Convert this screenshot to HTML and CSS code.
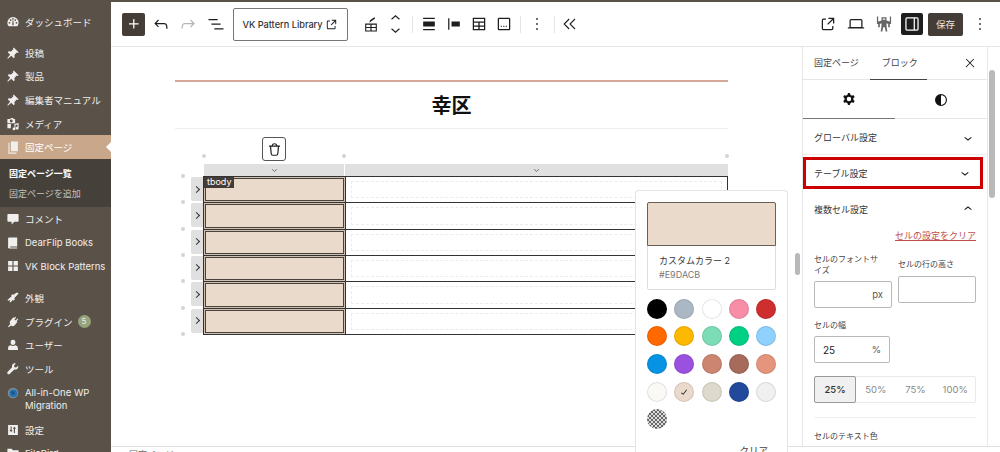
FILE: index.html
```html
<!DOCTYPE html>
<html lang="ja">
<head>
    <meta charset="UTF-8">
    <title>固定ページを編集</title>
    <link rel="stylesheet" href="styles.css">
</head>
<body>
<div class="app">
    <!-- 管理メニュー -->
    <nav class="adminmenu">
        <a class="menu-item first"><svg class="mi" viewBox="0 0 20 20"><path d="M10 3a8 8 0 0 0-8 8c0 2 .7 3.7 1.9 5h12.2A7.900 7.900 0 0 0 18 11a8 8 0 0 0-8-8zM5 12.500a1.300 1.300 0 1 1 0-2.600 1.300 1.300 0 0 1 0 2.600zm1.700-4a1.300 1.300 0 1 1 0-2.600 1.300 1.300 0 0 1 0 2.600zM10 6.700a1.200 1.200 0 1 1 0-2.400 1.200 1.200 0 0 1 0 2.400zm1 7.800H9l.2-5 .8-3 .8 3zm2.300-6a1.300 1.300 0 1 1 0-2.600 1.300 1.300 0 0 1 0 2.600zm1.700 4a1.300 1.300 0 1 1 0-2.600 1.300 1.300 0 0 1 0 2.600z"/></svg>ダッシュボード</a>
        <div class="menu-gap"></div>
        <a class="menu-item"><svg class="mi" viewBox="0 0 20 20"><path d="M11 2l7 7-1.500 1-1.200-.6-3.300 3.300.4 3.300-1.400 1.400-3.400-3.400L3 18l-1 0 0-1 3.900-4.600-3.400-3.400L3.900 7.600l3.300.4 3.300-3.300L10 3.500z"/></svg>投稿</a>
        <a class="menu-item"><svg class="mi" viewBox="0 0 20 20"><path d="M11 2l7 7-1.500 1-1.200-.6-3.300 3.300.4 3.300-1.400 1.400-3.400-3.400L3 18l-1 0 0-1 3.900-4.600-3.400-3.400L3.900 7.600l3.300.4 3.300-3.300L10 3.500z"/></svg>製品</a>
        <a class="menu-item"><svg class="mi" viewBox="0 0 20 20"><path d="M11 2l7 7-1.500 1-1.200-.6-3.300 3.300.4 3.300-1.400 1.400-3.400-3.400L3 18l-1 0 0-1 3.900-4.600-3.400-3.400L3.900 7.600l3.300.4 3.300-3.300L10 3.500z"/></svg>編集者マニュアル</a>
        <a class="menu-item"><svg class="mi" viewBox="0 0 20 20"><path d="M2 3h4l1-1.500h3L11 3h2v6H2zm5.500 4.700a2 2 0 1 0 0-4 2 2 0 0 0 0 4zM2 10h5v6H2zM12 10l6-1.500V16a2 2 0 1 1-1.500-1.900v-3.500L13.500 11.400V17a2 2 0 1 1-1.500-1.900z"/></svg>メディア</a>
        <a class="menu-item current"><svg class="mi" viewBox="0 0 20 20"><path d="M7 2h10v14H7zM5 4v14h10v1.500H3.500V4z"/></svg>固定ページ</a>
        <div class="submenu">
            <a class="sub-current">固定ページ一覧</a>
            <a>固定ページを追加</a>
        </div>
        <a class="menu-item"><svg class="mi" viewBox="0 0 20 20"><path d="M3 3h14a1 1 0 0 1 1 1v9a1 1 0 0 1-1 1h-5l-4 4v-4H3a1 1 0 0 1-1-1V4a1 1 0 0 1 1-1z"/></svg>コメント</a>
        <a class="menu-item"><svg class="mi" viewBox="0 0 20 20"><path d="M4 2h12v13H6v1.500h10V18H4.500L3 17V3z"/></svg>DearFlip Books</a>
        <a class="menu-item"><svg class="mi" viewBox="0 0 20 20"><path d="M3 3h6.200v6.200H3zM10.800 3H17v6.200h-6.200zM3 10.800h6.200V17H3zM10.800 10.800H17V17h-6.200z"/></svg>VK Block Patterns</a>
        <div class="menu-gap wide"></div>
        <a class="menu-item"><svg class="mi" viewBox="0 0 20 20"><path d="M18 3.500 15.500 2l-5 3.500-1.300-1L7.500 6l.5 1.500L2 13l1.500 1 3-1.500L5 15l1.500 1.500 3-3.500 1.500.7 1.700-1.700-.9-1.500z"/></svg>外観</a>
        <a class="menu-item"><svg class="mi" viewBox="0 0 20 20"><path d="M13 2.500l1.500 1.200-2.300 2.800 1.700 1.300 2.300-2.800L17.500 6l-2.400 3 1.200 1-4.500 5.500c-1.500 1-3.500.5-4.500-.5L4 17.500 3 16.500l3-3.500c-.8-1-1-3 0-4.300L10.500 3.200l1.200 1z"/></svg>プラグイン<span class="badge">5</span></a>
        <a class="menu-item"><svg class="mi" viewBox="0 0 20 20"><path d="M10 2.500a3.500 3.500 0 0 1 3.500 3.500c0 2-1.500 4-3.500 4S6.500 8 6.500 6A3.500 3.500 0 0 1 10 2.500zM7 10.500c1.800 1.300 4.200 1.300 6 0 2.300.5 4 1.800 4 4V17H3v-2.500c0-2.700 1.700-3.500 4-4z"/></svg>ユーザー</a>
        <a class="menu-item"><svg class="mi" viewBox="0 0 20 20"><path d="M17.500 5.500l-3 2.500-2.500-.5-.5-2.500 2.500-3c-2-.5-4 .2-5 2-.6 1-.7 2.300-.3 3.400L2.500 14c-1 1-.8 2.200 0 3s2 1 3-.1l6.500-6.300c1.800.6 3.800 0 4.900-1.600.7-1 .9-2.300.6-3.500z"/></svg>ツール</a>
        <a class="menu-item tall"><svg class="mi wpm" viewBox="0 0 20 20"><circle cx="10" cy="10" r="7.500" fill="#7e8b96"/><circle cx="10.500" cy="10.500" r="5.500" fill="#2271b1"/><circle cx="10" cy="10" r="2.500" fill="#1d5488"/></svg><span>All-in-One WP Migration</span></a>
        <a class="menu-item"><svg class="mi" viewBox="0 0 20 20"><path d="M3 3h14v14H3zm3.500 2v5H5l2.200 3 .1.100L9.500 10H8V5zM12 5l-2.300 3.300h1.500v6h1.600v-6h1.500z" fill-rule="evenodd"/></svg>設定</a>
        <a class="menu-item"><svg class="mi" viewBox="0 0 20 20"><path d="M2 4h6l2 2h8v11H2z"/></svg>FileBird</a>
    </nav>

    <div class="editor">
        <!-- ツールバー -->
        <header class="toolbar">
            <button class="tb-add"><svg viewBox="0 0 24 24"><path d="M11 12.500V17.500H12.500V12.500H17.500V11H12.500V6H11V11H6V12.500H11Z"/></svg></button>
            <svg class="ic ic-undo" viewBox="0 0 24 24"><path d="M18.300 11.700c-.6-.6-1.400-.9-2.300-.9H6.700l2.900-3.300-1.100-1-4.500 5L8.500 16l1-1-2.700-2.700H16c.5 0 .9.2 1.300.5 1 1 1 3.400 1 4.500v.3h1.500v-.2c0-1.500 0-4.300-1.500-5.700z"/></svg>
            <svg class="ic ic-redo" viewBox="0 0 24 24"><path d="M15.600 6.500l-1.100 1 2.900 3.300H8c-.9 0-1.700.3-2.300.9-1.400 1.500-1.400 4.200-1.400 5.600v.2h1.500v-.3c0-1.100 0-3.500 1-4.500.3-.3.700-.5 1.300-.5h9.200L14.500 15l1.100 1.100 4.600-4.600-4.600-5z"/></svg>
            <svg class="ic ic-list" viewBox="0 0 24 24"><path d="M3 6h11v1.500H3V6zm3.500 5.500h11V13h-11v-1.500zM21 17H10v1.500h11V17z"/></svg>
            <div class="pattern-box">VK Pattern Library<svg viewBox="0 0 24 24"><path d="M19.500 4.500h-7V6h4.440l-5.970 5.970 1.060 1.060L18 7.060v4.440h1.500v-7Zm-13 1a2 2 0 0 0-2 2v10a2 2 0 0 0 2 2h10a2 2 0 0 0 2-2v-3H17v3a.5.5 0 0 1-.5.5h-10a.5.5 0 0 1-.5-.5v-10a.5.5 0 0 1 .5-.5h3V5.500h-3Z"/></svg></div>
            <svg class="ic ic-table" viewBox="0 0 24 24"><path d="M5 11.500h14V21H5zm1.300 1.300v2.800h5V12.800zm6.400 0v2.800h5V12.800zm-6.400 4.100v2.800h5v-2.800zm6.400 0v2.800h5v-2.800z" fill-rule="evenodd"/><path d="M10 10.500l.8-3 5.200-3.500 1 1.500-5 3.500z"/></svg>
            <div class="movers">
                <svg viewBox="0 0 12 8"><path d="M1.500 6 6 2l4.500 4" fill="none" stroke="#1e1e1e" stroke-width="1.300"/></svg>
                <svg viewBox="0 0 12 8"><path d="M1.500 2 6 6l4.500-4" fill="none" stroke="#1e1e1e" stroke-width="1.300"/></svg>
            </div>
            <span class="tb-sep sep-a"></span>
            <svg class="ic ic-align" viewBox="0 0 24 24"><path d="M5 4.500h14V6H5zM5 9h14v6H5zM5 18h14v1.500H5z"/></svg>
            <svg class="ic ic-align2" viewBox="0 0 24 24"><path d="M5 5h1.500v14H5zM9 9h10v6H9z"/></svg>
            <svg class="ic ic-grid" viewBox="0 0 24 24"><path d="M4.500 4.500h15v15h-15zM6 6v3h12V6zm0 4.500v3.200h5.200v-3.200zm6.800 0v3.200H18v-3.200zM6 15.200V18h5.200v-2.800zm6.800 0V18H18v-2.800z" fill-rule="evenodd"/></svg>
            <svg class="ic ic-caption" viewBox="0 0 24 24"><path d="M6 4.500h12A1.500 1.500 0 0 1 19.500 6v12a1.500 1.500 0 0 1-1.500 1.500H6A1.500 1.500 0 0 1 4.500 18V6A1.500 1.500 0 0 1 6 4.500zM6 6v12h12V6zM8 14h1.500v1.300H8zM11 14h1.500v1.300H11zM14 14h1.500v1.300H14z" fill-rule="evenodd"/></svg>
            <span class="tb-sep sep-b"></span>
            <svg class="ic ic-kebab" viewBox="0 0 24 24"><path d="M13 19h-2v-2h2v2zm0-6h-2v-2h2v2zm0-6h-2V5h2v2z"/></svg>
            <span class="tb-sep sep-c"></span>
            <svg class="ic ic-collapse" viewBox="0 0 24 24"><path d="M11 6 5 12l6 6M18 6l-6 6 6 6" fill="none" stroke="#1e1e1e" stroke-width="1.300"/></svg>

            <div class="tb-right">
                <svg class="ic" viewBox="0 0 24 24"><path d="M19.500 4.500h-7V6h4.440l-5.970 5.970 1.060 1.060L18 7.060v4.440h1.500v-7Zm-13 1a2 2 0 0 0-2 2v10a2 2 0 0 0 2 2h10a2 2 0 0 0 2-2v-3H17v3a.5.5 0 0 1-.5.5h-10a.5.5 0 0 1-.5-.5v-10a.5.5 0 0 1 .5-.5h3V5.500h-3Z"/></svg>
                <svg class="ic ic-laptop" viewBox="0 0 24 24"><path d="M20.500 16h-.7V8c0-1.100-.9-2-2-2H6.200c-1.100 0-2 .9-2 2v8h-.7c-.8 0-1.500.7-1.500 1.500h20c0-.8-.7-1.500-1.500-1.500zM5.700 8c0-.3.2-.5.500-.5h11.600c.3 0 .5.2.5.5v7.600H5.700V8z"/></svg>
                <svg class="ic ic-robot" viewBox="0 0 24 24"><path d="M9 4h6v4h1l3 1v7h-2v-4l-2-1v3l1 7h-2l-1-5h-2l-1 5H8l1-7v-3l-2 1v4H5V9l3-1h1zm1.500 1.500v1.500h3V5.500zM3.500 3H5v9H3.500zM19 3h1.500v9H19z" fill-rule="evenodd"/></svg>
                <button class="tb-panel"><svg viewBox="0 0 24 24"><path d="M18 4H6a2 2 0 0 0-2 2v12c0 1.100.9 2 2 2h12a2 2 0 0 0 2-2V6a2 2 0 0 0-2-2zM5.500 18V6c0-.3.2-.5.5-.5h8v13H6c-.3 0-.5-.2-.5-.5zm13 0c0 .3-.2.5-.5.5h-2.500v-13H18c.3 0 .5.2.5.5v12z"/></svg></button>
                <button class="tb-save">保存</button>
                <svg class="ic ic-kebab-end" viewBox="0 0 24 24"><path d="M13 19h-2v-2h2v2zm0-6h-2v-2h2v2zm0-6h-2V5h2v2z"/></svg>
            </div>
        </header>

        <div class="workspace">
            <!-- 編集エリア -->
            <main class="canvas">
                <div class="page">
                    <hr class="title-rule">
                    <h2 class="page-title">幸区</h2>
                    <hr class="title-end">
                    <div class="table-block">
                        <button class="trash"><svg viewBox="0 0 24 24"><path fill-rule="evenodd" d="M12 5.500A2.250 2.250 0 0 0 9.878 7h4.244A2.251 2.251 0 0 0 12 5.500ZM12 4a3.751 3.751 0 0 0-3.675 3H5v1.500h1.270l.818 8.997a2.750 2.750 0 0 0 2.739 2.501h4.347a2.750 2.750 0 0 0 2.738-2.500L17.730 8.500H19V7h-3.325A3.751 3.751 0 0 0 12 4Zm4.224 4.500H7.776l.806 8.861a1.250 1.250 0 0 0 1.245 1.137h4.347a1.250 1.250 0 0 0 1.245-1.137l.805-8.861Z"/></svg></button>
                        <span class="dot d-top1"></span><span class="dot d-top2"></span><span class="dot d-top3"></span>
                        <div class="col-handles">
                            <div class="col-handle"><svg viewBox="0 0 12 8"><path d="M2 2l4 3.500L10 2" fill="none" stroke="#555" stroke-width="1.300"/></svg></div>
                            <div class="col-handle"><svg viewBox="0 0 12 8"><path d="M2 2l4 3.500L10 2" fill="none" stroke="#555" stroke-width="1.300"/></svg></div>
                        </div>
                        <div class="table-row-wrap">
                            <div class="row-handles">
                                <div class="row-handle"><i></i></div>
                                <div class="row-handle"><i></i></div>
                                <div class="row-handle"><i></i></div>
                                <div class="row-handle"><i></i></div>
                                <div class="row-handle"><i></i></div>
                                <div class="row-handle"><i></i></div>
                            </div>
                            <div class="dots-left"><span></span><span></span><span></span><span></span><span></span><span></span><span></span></div>
                            <div class="table">
                                <span class="tbody-tag">tbody</span>
                                <div class="tr"><div class="td sel"><b></b></div><div class="td"><b></b></div></div>
                                <div class="tr"><div class="td sel"><b></b></div><div class="td"><b></b></div></div>
                                <div class="tr"><div class="td sel"><b></b></div><div class="td"><b></b></div></div>
                                <div class="tr"><div class="td sel"><b></b></div><div class="td"><b></b></div></div>
                                <div class="tr"><div class="td sel"><b></b></div><div class="td"><b></b></div></div>
                                <div class="tr"><div class="td sel"><b></b></div><div class="td"><b></b></div></div>
                            </div>
                        </div>
                    </div>
                </div>
                <div class="canvas-thumb"></div>
            </main>

            <!-- 設定サイドバー -->
            <aside class="inspector">
                <div class="ins-body">
                    <div class="ins-tabs">
                        <span>固定ページ</span>
                        <span class="on">ブロック</span>
                        <svg viewBox="0 0 24 24"><path d="M13 11.800l6.100-6.300-1-1-6.100 6.200-6.100-6.200-1 1 6.100 6.300-6.500 6.700 1 1 6.500-6.600 6.500 6.600 1-1z"/></svg>
                    </div>
                    <div class="ins-icons">
                        <div class="on"><svg viewBox="0 0 24 24"><path fill-rule="evenodd" d="M10.289 4.836A1 1 0 0 1 11.275 4h1.306a1 1 0 0 1 .987.836l.244 1.466c.787.26 1.503.679 2.108 1.218l1.393-.522a1 1 0 0 1 1.216.437l.653 1.130a1 1 0 0 1-.23 1.273l-1.148.944a6.025 6.025 0 0 1 0 2.435l1.149.946a1 1 0 0 1 .23 1.272l-.653 1.130a1 1 0 0 1-1.216.437l-1.394-.522c-.605.54-1.320.958-2.108 1.218l-.244 1.466a1 1 0 0 1-.987.836h-1.306a1 1 0 0 1-.986-.836l-.244-1.466a5.995 5.995 0 0 1-2.108-1.218l-1.394.522a1 1 0 0 1-1.217-.436l-.653-1.131a1 1 0 0 1 .23-1.272l1.149-.946a6.026 6.026 0 0 1 0-2.435l-1.148-.944a1 1 0 0 1-.23-1.272l.653-1.131a1 1 0 0 1 1.217-.437l1.393.522a5.994 5.994 0 0 1 2.108-1.218l.244-1.466ZM14.929 12a3 3 0 1 1-6 0 3 3 0 0 1 6 0Z"/></svg></div>
                        <div><svg viewBox="0 0 24 24"><path fill-rule="evenodd" d="M12 4a8 8 0 1 0 0 16 8 8 0 0 0 0-16zm0 1.500v13a6.500 6.500 0 0 0 0-13z"/></svg></div>
                    </div>
                    <div class="section"><span>グローバル設定</span><svg viewBox="0 0 24 24"><path d="M17.500 11.600 12 16l-5.500-4.400.9-1.200L12 14l4.500-3.600z"/></svg></div>
                    <div class="section highlighted"><span>テーブル設定</span><svg viewBox="0 0 24 24"><path d="M17.500 11.600 12 16l-5.500-4.400.9-1.200L12 14l4.500-3.600z"/></svg></div>
                    <div class="section open"><span>複数セル設定</span><svg viewBox="0 0 24 24"><path d="M6.500 12.400 12 8l5.500 4.400-.9 1.200L12 10l-4.500 3.600z"/></svg></div>
                    <div class="cell-settings">
                        <a class="clear-link">セルの設定をクリア</a>
                        <div class="field-pair">
                            <div class="field">
                                <label>セルのフォントサイズ</label>
                                <div class="input"><em>px</em></div>
                            </div>
                            <div class="field">
                                <label>セルの行の高さ</label>
                                <div class="input"></div>
                            </div>
                        </div>
                        <label class="width-label">セルの幅</label>
                        <div class="input width-input"><span>25</span><em>%</em></div>
                        <div class="width-btns">
                            <span class="on">25%</span><span>50%</span><span>75%</span><span>100%</span>
                        </div>
                        <hr>
                        <label class="color-label">セルのテキスト色</label>
                    </div>
                </div>
                <div class="ins-scroll"><div></div></div>
            </aside>

            <!-- カラーピッカー -->
            <div class="picker">
                <div class="picker-card">
                    <div class="picker-preview"></div>
                    <div class="picker-info">
                        <div class="picker-name">カスタムカラー 2</div>
                        <div class="picker-hex">#E9DACB</div>
                    </div>
                </div>
                <div class="swatches">
                    <i style="background:#000000"></i>
                    <i style="background:#abb8c3"></i>
                    <i style="background:#ffffff"></i>
                    <i style="background:#f78da7"></i>
                    <i style="background:#cf2e2e"></i>
                    <i style="background:#ff6900"></i>
                    <i style="background:#fcb900"></i>
                    <i style="background:#7bdcb5"></i>
                    <i style="background:#00d084"></i>
                    <i style="background:#8ed1fc"></i>
                    <i style="background:#0693e3"></i>
                    <i style="background:#9b51e0"></i>
                    <i style="background:#cc8570"></i>
                    <i style="background:#a76b5b"></i>
                    <i style="background:#e6957d"></i>
                    <i style="background:#fbf9f5"></i>
                    <i class="checked" style="background:#e9dacb"><svg viewBox="0 0 24 24"><path d="M16.700 7.100l-6.300 8.500-3.300-2.500-.9 1.200 4.500 3.400L17.900 8z"/></svg></i>
                    <i style="background:#ded9cd"></i>
                    <i style="background:#214a9c"></i>
                    <i style="background:#f0f0f0"></i>
                    <i class="transparent"></i>
                </div>
                <div class="picker-clear">クリア</div>
            </div>
        </div>
        <footer class="crumbs">固定ページ</footer>
    </div>
</div>
</body>
</html>
```

FILE: styles.css
```css
* {
    box-sizing: border-box;
}
html, body {
    margin: 0;
    height: 452px;
    overflow: hidden;
}
body {
    font-family: 'Inter', 'Noto Sans CJK JP', sans-serif;
    font-size: 11px;
    color: #1e1e1e;
    background-color: #fff;
}
.app {
    display: flex;
    height: 452px;
    border-top: 2px solid #5a5248;
}
button {
    padding: 0;
    border: 0;
    font-family: inherit;
}

/* admin menu */
.adminmenu {
    flex: 0 0 111px;
    background-color: #5a5248;
    color: #f0efee;
    padding-top: 8px;
    overflow: hidden;
}
.menu-item {
    display: flex;
    align-items: center;
    height: 23.7px;
    padding-left: 6px;
    font-size: 9.5px;
    white-space: nowrap;
}
.menu-gap {
    height: 7px;
}
.menu-gap.wide {
    height: 8px;
}
.mi {
    flex: 0 0 14px;
    width: 14px;
    height: 14px;
    margin-right: 5px;
    fill: #f0efee;
}
.menu-item.current {
    position: relative;
    background-color: #c9a78b;
    color: #fff;
}
.menu-item.current::after {
    content: "";
    position: absolute;
    right: 0;
    top: 7px;
    border: 5px solid transparent;
    border-right-color: #fff;
    border-left-width: 0;
}
.submenu {
    height: 48px;
    padding: 5px 9px;
    background-color: #46403a;
    color: #c4c0bb;
    font-size: 9px;
}
.submenu a {
    display: block;
    line-height: 20px;
    white-space: nowrap;
}
.submenu .sub-current {
    color: #fff;
    font-weight: 700;
}
.menu-item.tall {
    height: 37px;
    white-space: normal;
    line-height: 13px;
}
.menu-item .wpm {
    align-self: flex-start;
    margin-top: 5px;
}
.badge {
    display: inline-block;
    width: 13px;
    height: 13px;
    margin-left: 5px;
    border-radius: 50%;
    background-color: #95a27a;
    font-size: 8px;
    line-height: 13px;
    text-align: center;
}

/* toolbar */
.editor {
    flex: 1;
    min-width: 0;
    display: flex;
    flex-direction: column;
}
.toolbar {
    flex: 0 0 45px;
    display: flex;
    align-items: center;
    padding-left: 11px;
    border-bottom: 1px solid #e6e6e6;
}
.ic {
    flex: 0 0 20px;
    width: 20px;
    height: 20px;
    fill: #1e1e1e;
}
.tb-add {
    width: 23px;
    height: 23px;
    margin-right: 6px;
    border-radius: 2px;
    background-color: #443c36;
    display: flex;
    align-items: center;
    justify-content: center;
}
.tb-add svg {
    width: 20px;
    height: 20px;
    fill: #fff;
}
.ic-redo {
    margin-left: 7px;
    fill: #b5b5b5;
}
.ic-list {
    margin-left: 8px;
}
.pattern-box {
    display: flex;
    align-items: center;
    justify-content: center;
    gap: 1px;
    width: 115px;
    height: 33px;
    margin-left: 7px;
    border: 1px solid #777;
    border-radius: 2px;
    font-size: 9.2px;
    font-weight: 500;
    color: #333;
    white-space: nowrap;
}
.pattern-box svg {
    width: 15px;
    height: 15px;
    fill: #1e1e1e;
}
.ic-table {
    margin-left: 13px;
}
.movers {
    display: flex;
    flex-direction: column;
    gap: 6px;
    margin-left: 9px;
}
.movers svg {
    display: block;
    width: 11px;
    height: 7px;
}
.tb-sep {
    width: 1px;
    height: 17px;
    background-color: #e4e4e4;
}
.sep-a {
    margin: 0 6px 0 11px;
}
.ic-align2,
.ic-grid,
.ic-caption {
    margin-left: 5px;
}
.sep-b {
    margin: 0 11px 0 6px;
}
.sep-c {
    margin: 0 5px 0 12px;
}
.ic-kebab {
    margin: 0 -5px;
}
.tb-right {
    margin-left: auto;
    display: flex;
    align-items: center;
    padding-right: 10px;
}
.ic-laptop {
    margin-left: 8px;
}
.ic-robot {
    margin-left: 8px;
    fill: #666;
}
.tb-panel {
    width: 22px;
    height: 22px;
    margin-left: 7px;
    border-radius: 2px;
    background-color: #1e1e1e;
    display: flex;
    align-items: center;
    justify-content: center;
}
.tb-panel svg {
    width: 20px;
    height: 20px;
    fill: #fff;
}
.tb-save {
    width: 35px;
    height: 23px;
    margin-left: 5px;
    border-radius: 2px;
    background-color: #443c36;
    color: #e8e6e4;
    font-size: 9.5px;
}
.ic-kebab-end {
    margin-left: 7px;
}

/* canvas */
.workspace {
    flex: 1;
    min-height: 0;
    display: flex;
    position: relative;
}
.canvas {
    position: relative;
    flex: 1;
    min-width: 0;
    overflow: hidden;
}
.page {
    width: 553px;
    margin: 0 auto;
    transform: translateX(-5px);
    padding-top: 33px;
}
.title-rule {
    margin: 0;
    border: 0;
    height: 2px;
    background-color: #d4a899;
}
.page-title {
    margin: 0;
    height: 46px;
    line-height: 49px;
    font-size: 20px;
    font-weight: 700;
    text-align: center;
    color: #111;
}
.title-end {
    margin: 0;
    border: 0;
    height: 1px;
    background-color: #eeeeee;
}
.table-block {
    position: relative;
    padding: 35px 0 0 28px;
}
.trash {
    position: absolute;
    left: 87px;
    top: 8px;
    width: 24px;
    height: 24px;
    border: 1px solid #555;
    border-radius: 3px;
    background-color: #fff;
    display: flex;
    align-items: center;
    justify-content: center;
}
.trash svg {
    width: 19px;
    height: 19px;
    fill: #1e1e1e;
}
.dot {
    position: absolute;
    top: 25px;
    width: 4px;
    height: 4px;
    border-radius: 50%;
    background-color: #d4d4d4;
}
.d-top1 { left: 27px; }
.d-top2 { left: 167px; }
.d-top3 { left: 550px; }
.col-handles {
    display: grid;
    grid-template-columns: 141px 1fr;
    height: 12px;
}
.col-handle {
    display: flex;
    align-items: center;
    justify-content: center;
    margin-left: 1px;
    background-color: #e0e0e0;
}
.col-handle svg {
    width: 7px;
    height: 5px;
}
.table-row-wrap {
    position: relative;
}
.row-handles {
    position: absolute;
    left: -12px;
    top: 1px;
    width: 12px;
}
.row-handle {
    display: flex;
    align-items: center;
    justify-content: center;
    height: 24px;
    margin-bottom: 2.33px;
    background-color: #e0e0e0;
    border-radius: 2px 0 0 2px;
}
.row-handle i {
    width: 5px;
    height: 5px;
    margin-left: -2px;
    border-top: 1px solid #333;
    border-right: 1px solid #333;
    transform: rotate(45deg);
}
.dots-left {
    position: absolute;
    left: -22px;
    top: -2px;
}
.dots-left span {
    display: block;
    width: 4px;
    height: 4px;
    margin-bottom: 22.33px;
    border-radius: 50%;
    background-color: #d4d4d4;
}
.table {
    position: relative;
    border-top: 1px solid #333;
    border-left: 1px solid #333;
    border-right: 1px solid #333;
}
.tr {
    display: grid;
    grid-template-columns: 141px 1fr;
    height: 26.33px;
    border-bottom: 1px solid #333;
}
.td {
    padding: 4px 5px;
}
.td + .td {
    border-left: 1px solid #333;
}
.td b {
    display: block;
    height: 100%;
    border: 1px dashed #ececec;
}
.td.sel {
    padding: 1px;
    background-color: #cfc0b2;
}
.td.sel b {
    background-color: #e9dacb;
    border: 1.5px solid #4a423a;
}
.tbody-tag {
    position: absolute;
    left: 0;
    top: 0;
    z-index: 2;
    padding: 0 3px;
    height: 11px;
    line-height: 10px;
    background-color: #443c36;
    color: #fff;
    font-size: 9px;
}
.canvas-thumb {
    position: absolute;
    right: 2px;
    top: 206px;
    width: 5px;
    height: 22px;
    border-radius: 3px;
    background-color: #b8b8b8;
}

/* inspector */
.inspector {
    flex: 0 0 198px;
    display: flex;
    border-left: 1px solid #e6e6e6;
    background-color: #fff;
}
.ins-body {
    flex: 1;
    min-width: 0;
    overflow: hidden;
}
.ins-tabs {
    display: flex;
    align-items: center;
    height: 33px;
    padding-left: 11px;
    border-bottom: 1px solid #e6e6e6;
    font-size: 9px;
    color: #444;
}
.ins-tabs span {
    line-height: 32px;
    white-space: nowrap;
}
.ins-tabs .on {
    margin-left: 11px;
    padding: 0 9px 0 12px;
    height: 33px;
    border-bottom: 1px solid #444;
}
.ins-tabs svg {
    width: 14px;
    height: 14px;
    margin-left: auto;
    margin-right: 10px;
    fill: #1e1e1e;
}
.ins-icons {
    display: grid;
    grid-template-columns: 92px 1fr;
    height: 39px;
    border-bottom: 1px solid #e6e6e6;
}
.ins-icons div {
    display: flex;
    align-items: center;
    justify-content: center;
}
.ins-icons .on {
    border-bottom: 1px solid #777;
    height: 39px;
}
.ins-icons svg {
    width: 18px;
    height: 18px;
    fill: #111;
}
.section {
    display: flex;
    align-items: center;
    justify-content: space-between;
    height: 36px;
    padding: 2px 11px 0;
    font-size: 9px;
    color: #333;
    border-bottom: 1px solid #eeeeee;
}
.section svg {
    width: 16px;
    height: 16px;
    fill: #1e1e1e;
}
.section.highlighted {
    height: 32px;
    margin: 2px 4px 1px 0;
    padding: 0 7px 0 8px;
    border: 3px solid #cc0000;
}
.section.open {
    border-bottom: 0;
}
.cell-settings {
    padding: 0 11px;
}
.clear-link {
    display: block;
    margin-top: 3px;
    line-height: 14px;
    text-align: right;
    color: #c0504d;
    font-size: 9px;
    text-decoration: underline;
}
.cell-settings label {
    display: block;
    font-size: 8px;
    line-height: 11px;
    color: #444;
}
.field-pair {
    display: flex;
    gap: 6px;
    margin-top: 11px;
}
.field {
    flex: 0 0 78px;
}
.field:first-child label {
    max-width: 66px;
}
.field:first-child .input {
    margin-top: 5px;
}
.field:last-child {
    padding-top: 5px;
}
.field:last-child .input {
    margin-top: 6px;
}
.input {
    display: flex;
    align-items: center;
    justify-content: flex-end;
    height: 27px;
    padding: 0 8px;
    border: 1px solid #b9b9b9;
    border-radius: 2px;
    font-size: 10px;
}
.input em {
    font-style: normal;
    color: #555;
    font-size: 9.5px;
}
.input span {
    margin-right: auto;
}
.cell-settings .width-label {
    margin-top: 11px;
    line-height: 12px;
}
.width-input {
    width: 76px;
    margin-top: 5px;
}
.width-btns {
    display: grid;
    grid-template-columns: 41px 1fr 1fr 1fr;
    height: 27px;
    margin-top: 13px;
    border: 1px solid #eaeaea;
    border-radius: 2px;
    font-size: 9.5px;
    color: #888;
    text-align: center;
    line-height: 25px;
}
.width-btns .on {
    margin: -1px 0 -1px -1px;
    background-color: #f0f0f0;
    border: 1px solid #999;
    border-radius: 2px;
    color: #333;
    font-weight: 500;
}
.cell-settings hr {
    margin: 14px 0 0;
    border: 0;
    height: 1px;
    background-color: #f0f0f0;
}
.cell-settings .color-label {
    margin-top: 12px;
    line-height: 12px;
}
.ins-scroll {
    flex: 0 0 13px;
    border-left: 1px solid #e9e9e9;
    padding: 23px 0 0 1px;
}
.ins-scroll div {
    width: 6px;
    height: 128px;
    border-radius: 3px;
    background-color: #b9b9b9;
}

/* color picker */
.picker {
    position: absolute;
    z-index: 5;
    left: 524px;
    top: 143px;
    width: 153px;
    height: 262px;
    padding: 11px;
    overflow: hidden;
    background-color: #fff;
    border: 1px solid #e4e4e4;
    border-bottom: 0;
    border-radius: 4px 4px 0 0;
}
.picker-card {
    border: 1px solid #ddd;
    border-radius: 2px;
}
.picker-preview {
    height: 44px;
    margin: -1px -1px 0;
    background-color: #e9dacb;
    border: 1px solid #6a6056;
    border-radius: 2px 2px 0 0;
}
.picker-info {
    height: 43px;
    padding: 8px 11px;
}
.picker-name {
    font-size: 9px;
    line-height: 14px;
    color: #333;
}
.picker-hex {
    font-size: 9px;
    line-height: 14px;
    color: #777;
}
.swatches {
    display: grid;
    grid-template-columns: repeat(5, 20px);
    justify-content: space-between;
    gap: 7.7px 0;
    margin-top: 8.5px;
}
.swatches i {
    display: flex;
    align-items: center;
    justify-content: center;
    width: 20px;
    height: 20px;
    border-radius: 50%;
    box-shadow: inset 0 0 0 1px rgba(0, 0, 0, 0.1);
}
.swatches svg {
    width: 12px;
    height: 12px;
    fill: #111;
}
.swatches .transparent {
    background-color: #fff;
    background-image: repeating-conic-gradient(#666 0 25%, #ddd 0 50%);
    background-size: 4px 4px;
}
.picker-clear {
    margin-top: 14px;
    text-align: right;
    padding-right: 8px;
    font-size: 9.5px;
    color: #444;
}

/* breadcrumb */
.crumbs {
    position: relative;
    flex: 0 0 6px;
    padding: 3px 0 0 18px;
    border-top: 1px solid #e0e0e0;
    font-size: 9px;
    line-height: 10px;
    color: #666;
    overflow: hidden;
    background-color: #fff;
}
```
